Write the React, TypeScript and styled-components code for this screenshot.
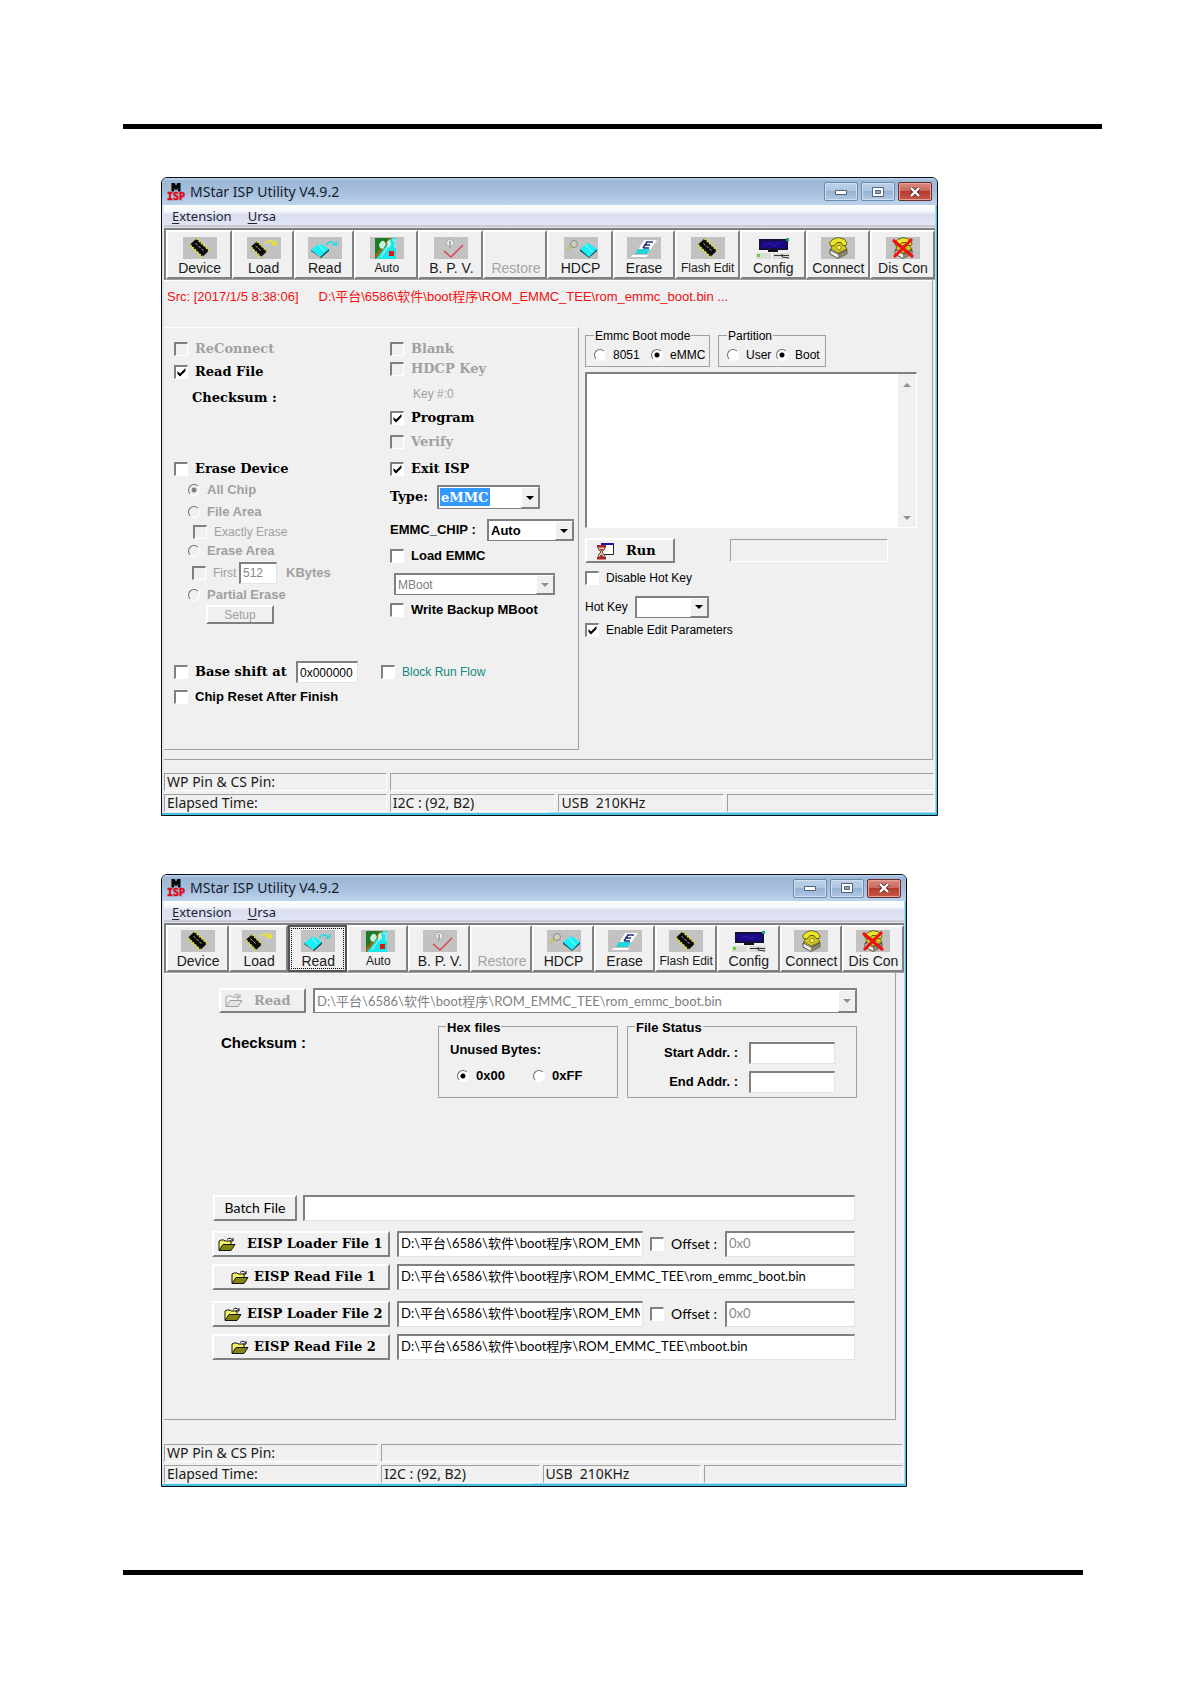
import React from "react";
import styled, { createGlobalStyle, css } from "styled-components";

const sans = `"Liberation Sans", "Noto Sans CJK SC", sans-serif`;
const ui = `"Noto Sans", "Noto Sans CJK SC", sans-serif`;
const slab = `"DejaVu Serif", serif`;
const round = `Lato, "Noto Sans CJK SC", sans-serif`;

const face = "#f0f0f0";
const shade = "#808080";
const line = "#a0a0a0";

const tick =
  "url(\"data:image/svg+xml,%3Csvg xmlns='http://www.w3.org/2000/svg' viewBox='0 0 11 11'%3E%3Cpath d='M1.5 4v3L4 9.5 9.500 4V1L4 6.500z'/%3E%3C/svg%3E\")";

const GlobalStyle = createGlobalStyle`
  *, *::before, *::after { box-sizing: border-box; }
  body { margin: 0; background: #fff; }
  button, input, select, textarea { font: inherit; color: inherit; margin: 0; border-radius: 0; outline: none; }
`;

/* ---------- page ---------- */

const Page = styled.main`
  padding: 124px 88px 108px 123px;
  font: 12px/16px ${sans};
  color: #000;
`;

const Rule = styled.hr<{ $short?: boolean }>`
  height: 5px;
  margin: 0 ${(p) => (p.$short ? 19 : 0)}px 0 0;
  border: 0;
  background: #000;
`;

const Figures = styled.div`
  display: flex;
  flex-direction: column;
  gap: 58px;
  padding: 48px 0 83px 38px;
`;

/* ---------- window chrome ---------- */

const Frame = styled.section<{ $width: number }>`
  width: 100%;
  max-width: ${(p) => p.$width}px;
  border: 1px solid #0a0f14;
  border-radius: 6px 6px 0 0;
  padding: 0 2px 3px;
  background: linear-gradient(90deg, #dfe4ee 50%, #b4d3ec 50%);
  box-shadow: inset -1px -2px 0 #45c3e0;
  overflow: hidden;
`;

const TitleBar = styled.header<{ $compact?: boolean }>`
  display: flex;
  align-items: center;
  height: ${(p) => (p.$compact ? 26 : 27)}px;
  margin: 0 -2px;
  padding: 0 5px;
  background: linear-gradient(#c3d6ea 0, #9db8d6 10%, #a5bfdc 50%, #bcd2ea 100%);
`;

const Title = styled.h1`
  flex: 1;
  margin: 0 0 0 5px;
  font: 14px/18px ${ui};
  color: #16202c;
`;

const Controls = styled.div`
  display: flex;
  gap: 3px;
`;

const ControlButton = styled.button<{ $close?: boolean }>`
  display: grid;
  place-items: center;
  width: 34px;
  height: 19px;
  padding: 0;
  border: 1px solid ${(p) => (p.$close ? "#6b2a2c" : "#6c88aa")};
  border-radius: 2px;
  box-shadow: inset 0 0 0 1px ${(p) => (p.$close ? "#e3a39b" : "#cfe0f1")};
  background: ${(p) =>
    p.$close
      ? "linear-gradient(#d98c80 0, #c9665a 48%, #b53a2c 50%, #c65a48 100%)"
      : "linear-gradient(#bdd1e8 0, #adc5e0 48%, #96b3d3 50%, #b0c8e2 100%)"};
`;

const MenuBar = styled.nav<{ $compact?: boolean }>`
  display: flex;
  gap: 16px;
  align-items: center;
  height: ${(p) => (p.$compact ? 22 : 23)}px;
  padding: 0 0 1px 8px;
  background: linear-gradient(#fff 0, #f3f5fb 30%, #dcdff1 40%, #dfe3f3 85%, #b9bcc6 92%, #f4f4f6 100%);
`;

const MenuItem = styled.button`
  border: 0;
  padding: 0;
  background: none;
  font: 13px/20px ${ui};
  color: #1c2530;

  u { text-underline-offset: 2px; }
`;

const ToolBar = styled.div<{ $columns: string; $compact?: boolean }>`
  display: grid;
  grid-template-columns: ${(p) => p.$columns};
  grid-auto-rows: ${(p) => (p.$compact ? 47 : 49)}px;
  border-top: 2px solid ${shade};
  border-left: 2px solid ${shade};
  border-bottom: 1px solid ${line};
  background: ${face};
`;

const ToolButton = styled.button<{ $small?: boolean; $active?: boolean }>`
  display: flex;
  flex-direction: column;
  align-items: center;
  justify-content: flex-end;
  min-width: 0;
  padding: 0 0 0 1px;
  border: 2px solid ${shade};
  border-color: #fff ${shade} ${shade} #fff;
  background: ${face};
  font: ${(p) => (p.$small ? 12 : 14)}px/18px ${sans};
  white-space: nowrap;
  color: #1a1a1a;

  &:disabled { color: #a4a4a4; }

  ${(p) =>
    p.$active &&
    css`
      border-color: #555;
      outline: 1px dotted #000;
      outline-offset: -4px;
    `}
`;

const Client = styled.div`
  background: ${face};
`;

const StatusGrid = styled.footer<{ $columns: string }>`
  display: grid;
  grid-template-columns: ${(p) => p.$columns};
  gap: 3px;
  padding-right: 1px;
  background: ${face};
`;

const StatusCell = styled.div<{ $wide?: boolean }>`
  grid-column: ${(p) => (p.$wide ? "span 3" : "auto")};
  height: 18px;
  padding-left: 2px;
  border: 1px solid #fff;
  border-top-color: ${line};
  border-left-color: ${line};
  font: 14px/16px ${ui};
  white-space: pre;
  color: #1a1a1a;
`;

/* ---------- form parts ---------- */

const Check = styled.input.attrs({ type: "checkbox" })`
  appearance: none;
  flex: none;
  width: 14px;
  height: 14px;
  border: 2px solid #fff;
  border-top-color: ${shade};
  border-left-color: ${shade};
  border-right-width: 1px;
  border-bottom-width: 1px;
  background: #fff;

  &:disabled { background: ${face}; }
  &:checked { background: #fff ${tick} center / 11px no-repeat; }
`;

const Radio = styled.input.attrs({ type: "radio" })`
  appearance: none;
  flex: none;
  width: 12px;
  height: 12px;
  border: 1px solid #fff;
  border-top-color: #707070;
  border-left-color: #707070;
  border-radius: 50%;
  background: #fff;

  &:checked { background: radial-gradient(circle, #000 0 2px, #fff 3px); }
  &:disabled { background: ${face}; }
  &:disabled:checked { background: radial-gradient(circle, ${shade} 0 2px, ${face} 3px); }
`;

type Face = "plain" | "bold" | "slab" | "round" | "path" | "large";

const faces: Record<Face, string> = {
  plain: `12px/16px ${sans}`,
  bold: `bold 13px/16px ${sans}`,
  slab: `bold 13px/16px ${slab}`,
  round: `14px/16px ${round}`,
  path: `13px/16px ${round}`,
  large: `bold 15px/18px ${sans}`,
};

const Text = styled.span<{ $face?: Face; $dim?: boolean; $indent?: number }>`
  padding-left: ${(p) => p.$indent ?? 0}px;
  font: ${(p) => faces[p.$face ?? "plain"]};
  color: ${(p) => (p.$dim ? line : "#000")};
  white-space: nowrap;
`;

const Choice = styled.label<{ $face?: Face; $dim?: boolean; $teal?: boolean; $indent?: number }>`
  display: flex;
  align-items: center;
  gap: 7px;
  padding-left: ${(p) => p.$indent ?? 0}px;
  font: ${(p) => faces[p.$face ?? "plain"]};
  color: ${(p) => (p.$dim ? line : p.$teal ? "#128a80" : "#000")};
  white-space: nowrap;
`;

const Field = styled.input.attrs({ type: "text" })<{ $face?: Face; $h?: number; $dim?: boolean }>`
  width: 100%;
  min-width: 0;
  height: ${(p) => p.$h ?? 22}px;
  padding: 0 2px ${(p) => (p.$face === "path" ? 4 : 0)}px;
  border: 2px solid #fff;
  border-top-color: ${shade};
  border-left-color: ${shade};
  border-right: 1px solid #e3e3e3;
  border-bottom: 1px solid #e3e3e3;
  background: #fff;
  font: ${(p) => faces[p.$face ?? "plain"]};
  color: ${(p) => (p.$dim ? "#888" : "#000")};
`;

const SelectFrame = styled.span<{ $h?: number }>`
  display: grid;
  grid-template-columns: minmax(0, 1fr) 18px;
  height: ${(p) => p.$h ?? 22}px;
  border: 2px solid ${shade};
  border-bottom-width: 1px;
  border-right-width: 1px;
  background: #fff;
`;

const SelectInput = styled.select<{ $face?: Face; $selected?: boolean }>`
  grid-area: 1 / 1 / 2 / 3;
  appearance: none;
  width: 100%;
  padding: 0 0 0 2px;
  border: 0;
  background: #fff;
  font: ${(p) => faces[p.$face ?? "plain"]};

  &:disabled { color: #808080; opacity: 1; }

  ${(p) =>
    p.$selected &&
    css`
      color: #fff;
      background: linear-gradient(#3399ff, #3399ff) 1px 1px / 50px 18px no-repeat #fff;
    `}
`;

const SelectArrow = styled.span`
  grid-area: 1 / 2;
  display: grid;
  place-items: center;
  border: 1px solid ${shade};
  border-top-color: #fff;
  border-left-color: #fff;
  background: ${face};
  pointer-events: none;
`;

const PushButton = styled.button<{ $face?: Face; $gap?: number; $start?: number }>`
  display: flex;
  align-items: center;
  justify-content: ${(p) => (p.$start === undefined ? "center" : "flex-start")};
  gap: ${(p) => p.$gap ?? 6}px;
  width: 100%;
  height: 100%;
  padding: 0 0 0 ${(p) => p.$start ?? 0}px;
  border: 2px solid ${shade};
  border-color: #fff ${shade} ${shade} #fff;
  background: ${face};
  font: ${(p) => faces[p.$face ?? "plain"]};
  white-space: nowrap;

  &:disabled { color: ${line}; }
`;

const Group = styled.fieldset<{ $pad: string }>`
  min-width: 0;
  margin: 0;
  padding: ${(p) => p.$pad};
  border: 1px solid ${line};
`;

const Legend = styled.legend<{ $face?: Face }>`
  padding: 2px 1px 0;
  font: ${(p) => faces[p.$face ?? "plain"]};
  line-height: 15px;
`;

const Columns = styled.div<{ $cols: string }>`
  display: grid;
  grid-template-columns: ${(p) => p.$cols};
  align-items: center;
`;

/* ---------- first window ---------- */

const FlashBody = styled(Client)`
  padding: 0 2px 13px 0;
`;

const FlashPanel = styled.div`
  border-right: 1px solid ${line};
  border-bottom: 1px solid ${line};
  box-shadow: inset 0 1px 0 #fff;
  padding-bottom: 9px;
`;

const SourceLine = styled.p`
  display: flex;
  gap: 20px;
  margin: 0;
  padding: 9px 0 22px 3px;
  font: 13px/16px ${sans};
  color: #f01010;
  white-space: nowrap;
`;

const FlashSplit = styled.div`
  display: grid;
  grid-template-columns: 415px minmax(0, 1fr);
  column-gap: 6px;
`;

const OptionPanel = styled.div`
  padding: 10px 0 40px 10px;
  border-top: 1px solid #fff;
  border-right: 1px solid ${line};
  border-bottom: 1px solid ${line};
`;

const OptionColumns = styled.div`
  display: grid;
  grid-template-columns: 216px minmax(0, 1fr);
`;

const OptionStack = styled.div<{ $rows: string }>`
  display: grid;
  grid-template-rows: ${(p) => p.$rows};
  align-content: start;
  align-items: center;
`;

const EraseHeading = styled.div`
  align-self: end;
  display: grid;
  align-items: center;
  height: 18px;
`;

const ShiftRows = styled.div`
  display: grid;
  grid-template-rows: 26px 24px;
  align-items: center;
  padding-top: 35px;
`;

const SetupSlot = styled.div`
  width: 68px;
  height: 19px;
  margin-left: 32px;
`;

const SelectIndent = styled.div`
  width: 165px;
  padding-left: 4px;
`;

const RunSide = styled.div`
  width: 332px;
`;

const GroupRow = styled.div`
  display: grid;
  grid-template-columns: 125px 108px;
  column-gap: 8px;
`;

const RadioLine = styled.div<{ $cols: string; $h: number; $indent?: number }>`
  display: grid;
  grid-template-columns: ${(p) => p.$cols};
  align-items: center;
  height: ${(p) => p.$h}px;
  padding-left: ${(p) => p.$indent ?? 0}px;
`;

const LogBox = styled.div`
  display: flex;
  height: 156px;
  margin-top: 5px;
  border: 2px solid #fff;
  border-top-color: ${shade};
  border-left-color: ${shade};
  border-right-width: 1px;
  border-bottom-width: 1px;
`;

const LogText = styled.textarea`
  flex: 1;
  border: 0;
  resize: none;
  background: #fff;
`;

const LogScroll = styled.div`
  display: flex;
  flex-direction: column;
  justify-content: space-between;
  align-items: center;
  width: 18px;
  padding: 9px 0 7px;
  background: ${face};
`;

const RunRow = styled.div`
  display: grid;
  grid-template-columns: 90px 158px;
  grid-template-rows: 25px;
  column-gap: 55px;
  align-items: center;
  margin-top: 10px;
`;

const Progress = styled.div`
  height: 23px;
  border: 1px solid #fff;
  border-top-color: ${line};
  border-left-color: ${line};
`;

const HotKeyRows = styled.div`
  display: grid;
  grid-template-rows: 30px 27px 20px;
  align-items: center;
`;

/* ---------- second window ---------- */

const ReadBody = styled(Client)`
  padding: 0 8px 24px 0;
`;

const ReadPanel = styled.div`
  padding: 15px 38px 59px 48px;
  border-right: 1px solid ${line};
  border-bottom: 1px solid ${line};
  box-shadow: inset 0 1px 0 #fff;
`;

const ReadRow = styled.div`
  display: grid;
  grid-template-columns: 87px minmax(0, 1fr);
  column-gap: 7px;
  height: 25px;
  padding-left: 7px;
`;

const InfoRow = styled.div`
  display: grid;
  grid-template-columns: 208px 180px minmax(0, 1fr);
  column-gap: 9px;
  padding: 5px 0 0 9px;
`;

const ChecksumCell = styled.div`
  padding-top: 16px;
`;

const AddressGrid = styled.div`
  display: grid;
  grid-template-columns: 1fr 86px;
  gap: 7px 11px;
  align-items: center;
  justify-items: end;
  padding: 7px 21px 4px 0;
`;

const BatchRow = styled.div`
  display: grid;
  grid-template-columns: 84px minmax(0, 1fr);
  column-gap: 6px;
  height: 26px;
  margin: 97px 2px 10px 1px;
`;

const FilePairs = styled.div`
  display: grid;
  row-gap: 11px;
  margin-right: 2px;
`;

const FilePair = styled.div`
  display: grid;
  grid-auto-rows: 26px;
  row-gap: 7px;
`;

const FileRow = styled.div<{ $offset?: boolean }>`
  display: grid;
  grid-template-columns: 178px ${(p) => (p.$offset ? "minmax(0, 246px) 68px minmax(0, 1fr)" : "minmax(0, 1fr)")};
  column-gap: 7px;
`;

/* ---------- drawings ---------- */

const AppLogo = () => (
  <svg width="18" height="18" viewBox="0 0 18 18" aria-hidden="true">
    <text x="9" y="8" textAnchor="middle" fontFamily="DejaVu Sans" fontWeight="bold" fontSize="10" stroke="#000" strokeWidth="0.800">M</text>
    <text x="9" y="17" textAnchor="middle" fontFamily="DejaVu Sans Mono" fontWeight="bold" fontSize="10" fill="#d80c18" stroke="#d80c18" strokeWidth="0.600">ISP</text>
  </svg>
);

const Down = ({ dim }: { dim?: boolean }) => (
  <svg width="8" height="4" viewBox="0 0 8 4" aria-hidden="true">
    <path d="M0 0h8L4 4z" fill={dim ? "#909090" : "#000"} />
  </svg>
);

const Up = () => (
  <svg width="8" height="4" viewBox="0 0 8 4" aria-hidden="true">
    <path d="M0 4h8L4 0z" fill="#909090" />
  </svg>
);

const Chip = () => (
  <g>
    <path d="M7 7.500L13.500 1.500 26 13.500 19.500 20z" fill="#111" />
    <path d="M7 8l12.500 12M13.500 1.500L26 13.500" stroke="#e0dc20" strokeWidth="2" strokeDasharray="1.800 1.400" />
    <path d="M8.500 7.500L13.500 3 24.500 13.500 19.500 18z" fill="#0a0a0a" />
    <path d="M12.500 6.500l2 1.500M15.500 9l2 2M18.500 12l2 1.500" stroke="#b0b0b0" />
  </g>
);

const SmallChip = () => (
  <g>
    <path d="M4 9.500L10 4.500 20 14.500 14 20z" fill="#111" />
    <path d="M4 10l10 10M10 4.500l10 10" stroke="#d8d41c" strokeWidth="1.800" strokeDasharray="1.800 1.400" />
    <path d="M5.500 9.500L10 6 18.500 14.500 14 18z" fill="#0a0a0a" />
    <path d="M8.500 9l2 1.500M11.500 11.500l2 2" stroke="#c0c0c0" />
  </g>
);

const Phone = () => (
  <g>
    <path d="M9 13l8-4 9 4v4l-9 4.500-8-4.500z" fill="#f0ece0" stroke="#333" strokeWidth="0.800" />
    <path d="M17 17l9-4v4l-9 4.500z" fill="#8c8468" />
    <path d="M9 13l8 4 9-4" stroke="#333" strokeWidth="0.800" fill="none" />
    <path d="M10 12l2-7h9l5 7-9 4z" fill="#d0c81c" stroke="#4a4600" strokeWidth="0.700" />
    <path d="M8.500 6l3-3.500L17 0.500l6 1.500 3 4-1 2.500h-3L20 5.500h-4L13 9l-3.500-.5z" fill="#ece430" stroke="#4a4600" strokeWidth="0.800" />
    <circle cx="18" cy="10.500" r="2.200" fill="#f6f070" stroke="#6a6600" strokeWidth="0.700" />
  </g>
);

const drawings: Record<string, React.ReactNode> = {
  device: <Chip />,
  load: (
    <g>
      <SmallChip />
      <path d="M18 6.500q4-4 8-1.500l2 2M24.500 7.500h4.500v-4" fill="none" stroke="#f0e818" strokeWidth="1.500" />
    </g>
  ),
  read: (
    <g>
      <path d="M3 13l8-6 4 1 6 4-8 8z" fill="#18f0f8" />
      <path d="M3 13l9 7 9-8v2l-8 7-10-7z" fill="#0a5060" />
      <path d="M11 8l5 6" stroke="#a8fcff" />
      <path d="M18 8q4-5 8-2l1.500 1.500M24 8h4.500V4" fill="none" stroke="#30d8e8" strokeWidth="1.500" />
    </g>
  ),
  auto: (
    <g>
      <path d="M5 1h21v21H5z" fill="#18e8ec" />
      <path d="M5 1h16L5 19z" fill="#1d7a28" />
      <path d="M22 1L6 22H5v-4L19 1z" fill="#8a6a10" />
      <path d="M9 8q2-5 5-4l2 3-3 5-3-1zM17 5l3-3 1 6-3 3z" fill="#c8f4dc" />
      <path d="M22 3h3v8M19 8l-8 12" stroke="#c8f4f0" fill="none" />
      <path d="M19 14h5v5h-5z" fill="#e81010" />
    </g>
  ),
  bpv: (
    <g>
      <circle cx="16" cy="6" r="3.500" fill="#f0f0f0" stroke="#999" strokeWidth="0.700" />
      <path d="M15 4v7h2V4z" fill="#aaa" />
      <path d="M10 14l7 6L29 8" fill="none" stroke="#d84850" strokeWidth="1.500" />
    </g>
  ),
  hdcp: (
    <g>
      <circle cx="10" cy="7" r="3.500" fill="#d0d0c0" stroke="#888" />
      <path d="M7 9l-4 4" stroke="#c8c020" strokeWidth="1.500" />
      <path d="M16 12l8-6 9 6-8 8z" fill="#18f0f8" />
      <path d="M16 12l9 8 8-8v2l-8 7-9-7z" fill="#0a5060" />
      <path d="M22 8l6 7" stroke="#a8fcff" />
    </g>
  ),
  erase: (
    <g>
      <path d="M17 3h13l-7 10H11z" fill="#fafafa" />
      <path d="M11 12h12l-3 5H8z" fill="#20d8dc" />
      <path d="M19 5h7M17 8h6M16 11h6M20 5l-4 6" stroke="#20307a" strokeWidth="1.500" fill="none" />
      <path d="M5 18h17l-3 2H4z" fill="#fff" />
    </g>
  ),
  config: (
    <g>
      <path d="M3 2h29v11H3z" fill="#16103c" />
      <path d="M5 4h25v7H5z" fill="#160a88" />
      <path d="M8 9l5-3 5 3 6-4" stroke="#4a18a0" fill="none" />
      <path d="M30 1h3v3h-3z" fill="#10a878" />
      <path d="M12 13h10v2H12z" fill="#111" />
      <path d="M0 16h15v6H0zM17 16h17v6H17z" fill="#dcdcd8" />
      <path d="M18 18.500h15M26 17v3l7 1" stroke="#333" fill="none" />
      <path d="M1 17h3v3H1z" fill="#60d830" />
    </g>
  ),
  connect: <Phone />,
  discon: (
    <g>
      <Phone />
      <path d="M7 3l20 17M26 2L8 20" stroke="#f01010" strokeWidth="3" />
    </g>
  ),
  flash: <Chip />,
};

const bare = new Set(["config"]);

const ToolIcon = ({ name }: { name: string }) => (
  <svg width="34" height="22" viewBox="0 0 34 22" aria-hidden="true">
    {!bare.has(name) && <path d="M0 0h34v22H0z" fill="#c2c2c2" />}
    {drawings[name]}
  </svg>
);

const Folder = ({ dim }: { dim?: boolean }) => (
  <svg width="18" height="15" viewBox="0 0 18 15" aria-hidden="true">
    <path d="M1 13V4l2-1h3l1 1h6v3" fill={dim ? "#f4f4f4" : "#f8f460"} stroke={dim ? "#a0a0a0" : "#111"} />
    <path d="M1 13.500L5 7.500h12l-4 6z" fill={dim ? "#e4e4e4" : "#848410"} stroke={dim ? "#a0a0a0" : "#111"} />
    <path d="M9 2.500q3-3 6 1M15 1v3h-3" fill="none" stroke={dim ? "#a0a0a0" : "#111"} />
  </svg>
);

const Hourglass = () => (
  <svg width="19" height="18" viewBox="0 0 19 18" aria-hidden="true">
    <path d="M5.500 1.500h12v11h-12z" fill="#fff" stroke="#222" />
    <path d="M5 1h13v2H5z" fill="#1818a0" />
    <path d="M1.500 4.500h8L8 8l-2 2 2 2 1.500 4h-8L3 12l2-2-2-2z" fill="#e0c4b4" stroke="#5a2010" strokeWidth="0.800" />
    <path d="M1 3h9v2.500H1zM1 15h9v2.500H1z" fill="#a82424" />
    <path d="M3.500 7h4L5.500 9.500zM3 15l2.500-3L8 15z" fill="#8a4a30" />
  </svg>
);

/* ---------- composition ---------- */

const tools = [
  { id: "device", label: "Device" },
  { id: "load", label: "Load" },
  { id: "read", label: "Read" },
  { id: "auto", label: "Auto", small: true },
  { id: "bpv", label: "B. P. V." },
  { id: "restore", label: "Restore", disabled: true },
  { id: "hdcp", label: "HDCP" },
  { id: "erase", label: "Erase" },
  { id: "flash", label: "Flash Edit", small: true },
  { id: "config", label: "Config" },
  { id: "connect", label: "Connect" },
  { id: "discon", label: "Dis Con" },
];

type WindowProps = {
  width: number;
  compact?: boolean;
  toolColumns: string;
  statusColumns: string;
  active?: string;
  children: React.ReactNode;
};

const UtilityWindow = ({ width, compact, toolColumns, statusColumns, active, children }: WindowProps) => (
  <Frame $width={width}>
    <TitleBar $compact={compact}>
      <AppLogo />
      <Title>MStar ISP Utility V4.9.2</Title>
      <Controls>
        <ControlButton aria-label="Minimize">
          <svg width="12" height="6" viewBox="0 0 12 6">
            <path d="M0.500 1.500h11v4H0.500z" fill="#fff" stroke="#53627a" />
          </svg>
        </ControlButton>
        <ControlButton aria-label="Maximize">
          <svg width="12" height="10" viewBox="0 0 12 10">
            <path d="M0.500 0.500h11v9H0.500z" fill="#fff" stroke="#53627a" />
            <path d="M3.500 3.500h5v3h-5z" fill="#8fa9c8" stroke="#53627a" />
          </svg>
        </ControlButton>
        <ControlButton $close aria-label="Close">
          <svg width="12" height="10" viewBox="0 0 12 10">
            <path d="M2 1l8 8M10 1L2 9" stroke="#5a3038" strokeWidth="4" />
            <path d="M2 1l8 8M10 1L2 9" stroke="#fff" strokeWidth="2.400" />
          </svg>
        </ControlButton>
      </Controls>
    </TitleBar>
    <MenuBar $compact={compact}>
      <MenuItem><u>E</u>xtension</MenuItem>
      <MenuItem><u>U</u>rsa</MenuItem>
    </MenuBar>
    <ToolBar $columns={toolColumns} $compact={compact}>
      {tools.map((t) => (
        <ToolButton key={t.id} $small={t.small} $active={t.id === active} disabled={t.disabled}>
          {!t.disabled && <ToolIcon name={t.id} />}
          <span>{t.label}</span>
        </ToolButton>
      ))}
    </ToolBar>
    {children}
    <StatusGrid $columns={statusColumns}>
      <StatusCell>WP Pin &amp; CS Pin:</StatusCell>
      <StatusCell $wide />
      <StatusCell>Elapsed Time:</StatusCell>
      <StatusCell>I2C : (92, B2)</StatusCell>
      <StatusCell>{"USB  210KHz"}</StatusCell>
      <StatusCell />
    </StatusGrid>
  </Frame>
);

type DropProps = {
  label: string;
  value: string;
  h?: number;
  face?: Face;
  selected?: boolean;
  disabled?: boolean;
};

const DropDown = ({ label, value, h, face: f, selected, disabled }: DropProps) => (
  <SelectFrame $h={h}>
    <SelectInput aria-label={label} $face={f} $selected={selected} disabled={disabled} defaultValue={value}>
      <option value={value}>{value}</option>
    </SelectInput>
    <SelectArrow><Down dim={disabled} /></SelectArrow>
  </SelectFrame>
);

const base = "D:\\平台\\6586\\软件\\boot程序\\ROM_EMMC_TEE\\";
const bootPath = base + "rom_emmc_boot.bin";

const FlashWindow = () => (
  <UtilityWindow
    width={777}
    toolColumns="66fr 62fr 60fr 64fr 65fr 64fr 65fr 62fr 65fr 66fr 64fr 65fr"
    statusColumns="223fr 166fr 166fr 207fr"
  >
    <FlashBody>
      <FlashPanel>
        <SourceLine>
          <span>Src: [2017/1/5 8:38:06]</span>
          <span>{bootPath} ...</span>
        </SourceLine>
        <FlashSplit>
          <OptionPanel>
            <OptionColumns>
              <OptionStack $rows="22px 24px 28px 66px 24px 20px 20px 18px 25px 20px 19px">
                <Choice $face="slab" $dim><Check disabled />ReConnect</Choice>
                <Choice $face="slab"><Check defaultChecked />Read File</Choice>
                <Text $face="slab" $indent={18}>Checksum :</Text>
                <EraseHeading>
                  <Choice $face="slab"><Check />Erase Device</Choice>
                </EraseHeading>
                <Choice $face="bold" $dim $indent={14}><Radio name="erase" disabled defaultChecked />All Chip</Choice>
                <Choice $face="bold" $dim $indent={14}><Radio name="erase" disabled />File Area</Choice>
                <Choice $dim $indent={19}><Check disabled />Exactly Erase</Choice>
                <Choice $face="bold" $dim $indent={14}><Radio name="erase" disabled />Erase Area</Choice>
                <Columns $cols="65px 38px auto">
                  <Choice $dim $indent={18}><Check disabled />First</Choice>
                  <Field aria-label="First KBytes" defaultValue="512" disabled $dim />
                  <Text $face="bold" $dim $indent={9}>KBytes</Text>
                </Columns>
                <Choice $face="bold" $dim $indent={14}><Radio name="erase" disabled />Partial Erase</Choice>
                <SetupSlot><PushButton disabled>Setup</PushButton></SetupSlot>
              </OptionStack>
              <OptionStack $rows="22px 18px 32px 16px 32px 22px 34px 32px 20px 36px 16px">
                <Choice $face="slab" $dim><Check disabled />Blank</Choice>
                <Choice $face="slab" $dim><Check disabled />HDCP Key</Choice>
                <Text $dim $indent={23}>Key #:0</Text>
                <Choice $face="slab"><Check defaultChecked />Program</Choice>
                <Choice $face="slab" $dim><Check disabled />Verify</Choice>
                <Choice $face="slab"><Check defaultChecked />Exit ISP</Choice>
                <Columns $cols="47px 103px">
                  <Text $face="slab">Type:</Text>
                  <DropDown label="Type" value="eMMC" h={24} face="slab" selected />
                </Columns>
                <Columns $cols="97px 87px">
                  <Text $face="bold">EMMC_CHIP :</Text>
                  <DropDown label="EMMC_CHIP" value="Auto" face="bold" />
                </Columns>
                <Choice $face="bold"><Check />Load EMMC</Choice>
                <SelectIndent><DropDown label="Load EMMC image" value="MBoot" disabled /></SelectIndent>
                <Choice $face="bold"><Check />Write Backup MBoot</Choice>
              </OptionStack>
            </OptionColumns>
            <ShiftRows>
              <Columns $cols="122px 62px auto">
                <Choice $face="slab"><Check />Base shift at</Choice>
                <Field aria-label="Base shift" defaultValue="0x000000" />
                <Choice $teal $indent={23}><Check />Block Run Flow</Choice>
              </Columns>
              <Choice $face="bold"><Check />Chip Reset After Finish</Choice>
            </ShiftRows>
          </OptionPanel>
          <RunSide>
            <GroupRow>
              <Group $pad="0 0 1px 8px">
                <Legend>Emmc Boot mode</Legend>
                <RadioLine $cols="57px auto" $h={21}>
                  <Choice><Radio name="mode" />8051</Choice>
                  <Choice><Radio name="mode" defaultChecked />eMMC</Choice>
                </RadioLine>
              </Group>
              <Group $pad="0 0 1px 8px">
                <Legend>Partition</Legend>
                <RadioLine $cols="49px auto" $h={21}>
                  <Choice><Radio name="partition" />User</Choice>
                  <Choice><Radio name="partition" defaultChecked />Boot</Choice>
                </RadioLine>
              </Group>
            </GroupRow>
            <LogBox>
              <LogText aria-label="Log" readOnly />
              <LogScroll><Up /><Down dim /></LogScroll>
            </LogBox>
            <RunRow>
              <PushButton $face="slab" $gap={11} $start={9}><Hourglass />Run</PushButton>
              <Progress />
            </RunRow>
            <HotKeyRows>
              <Choice><Check />Disable Hot Key</Choice>
              <Columns $cols="50px 74px">
                <Text>Hot Key</Text>
                <DropDown label="Hot Key" value="" />
              </Columns>
              <Choice><Check defaultChecked />Enable Edit Parameters</Choice>
            </HotKeyRows>
          </RunSide>
        </FlashSplit>
      </FlashPanel>
    </FlashBody>
  </UtilityWindow>
);

type FileLineProps = { label: string; value: string; offset?: boolean; start: number; gap?: number };

const FileLine = ({ label, value, offset, start, gap }: FileLineProps) => (
  <FileRow $offset={offset}>
    <PushButton $face="slab" $start={start} $gap={gap ?? 5}><Folder />{label}</PushButton>
    <Field aria-label={label} $face="path" $h={26} defaultValue={value} />
    {offset && (
      <>
        <Choice $face="round"><Check />Offset :</Choice>
        <Field aria-label={`${label} offset`} $face="path" $h={26} $dim disabled defaultValue="0x0" />
      </>
    )}
  </FileRow>
);

const ReadWindow = () => (
  <UtilityWindow
    width={746}
    compact
    active="read"
    toolColumns="63fr 59fr 59fr 61fr 62fr 62fr 61fr 61fr 62fr 63fr 62fr 62fr"
    statusColumns="214fr 158fr 158fr 199fr"
  >
    <ReadBody>
      <ReadPanel>
        <ReadRow>
          <PushButton $face="slab" $gap={11} $start={4} disabled><Folder dim />Read</PushButton>
          <DropDown label="Source file" value={bootPath} h={25} face="path" disabled />
        </ReadRow>
        <InfoRow>
          <ChecksumCell><Text $face="large">Checksum :</Text></ChecksumCell>
          <Group $pad="0 0 8px 7px">
            <Legend $face="bold">Hex files</Legend>
            <RadioLine $cols="auto" $h={29} $indent={4}>
              <Text $face="bold">Unused Bytes:</Text>
            </RadioLine>
            <RadioLine $cols="76px auto" $h={24} $indent={11}>
              <Choice $face="bold"><Radio name="fill" defaultChecked />0x00</Choice>
              <Choice $face="bold"><Radio name="fill" />0xFF</Choice>
            </RadioLine>
          </Group>
          <Group $pad="0 0 0 7px">
            <Legend $face="bold">File Status</Legend>
            <AddressGrid>
              <Text as="label" htmlFor="start" $face="bold">Start Addr. :</Text>
              <Field id="start" />
              <Text as="label" htmlFor="end" $face="bold">End Addr. :</Text>
              <Field id="end" />
            </AddressGrid>
          </Group>
        </InfoRow>
        <BatchRow>
          <PushButton $face="round">Batch File</PushButton>
          <Field aria-label="Batch file" $h={26} />
        </BatchRow>
        <FilePairs>
          <FilePair>
            <FileLine label="EISP Loader File 1" value={bootPath} offset start={4} gap={11} />
            <FileLine label="EISP Read File 1" value={bootPath} start={17} />
          </FilePair>
          <FilePair>
            <FileLine label="EISP Loader File 2" value={bootPath} offset start={10} />
            <FileLine label="EISP Read File 2" value={base + "mboot.bin"} start={17} />
          </FilePair>
        </FilePairs>
      </ReadPanel>
    </ReadBody>
  </UtilityWindow>
);

export default function App() {
  return (
    <>
      <GlobalStyle />
      <Page>
        <Rule />
        <Figures>
          <FlashWindow />
          <ReadWindow />
        </Figures>
        <Rule $short />
      </Page>
    </>
  );
}
